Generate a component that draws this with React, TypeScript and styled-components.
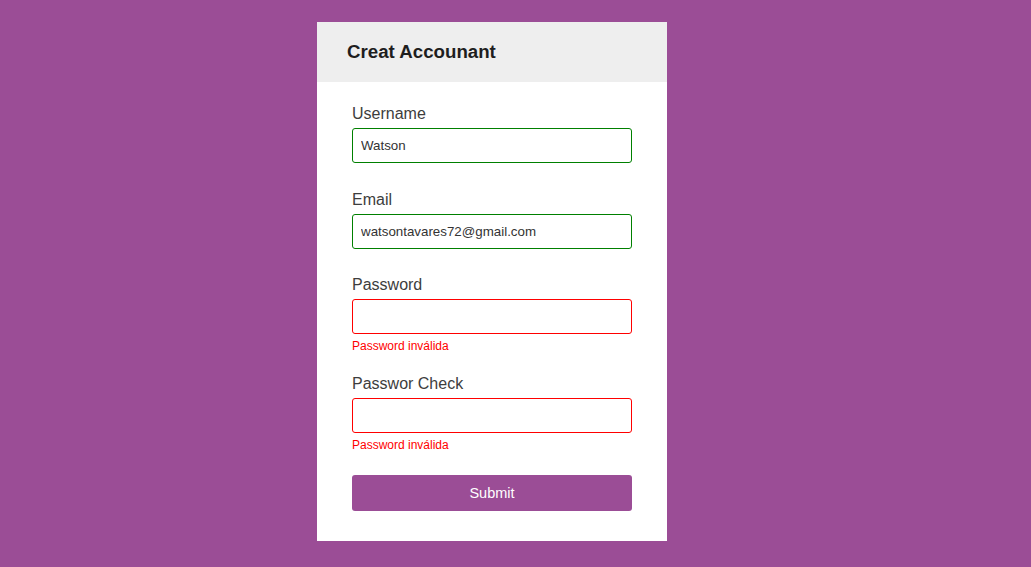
import React from 'react';
import styled, { createGlobalStyle } from 'styled-components';

const purple = '#9b4d96';

const GlobalStyle = createGlobalStyle`
    html, body {
        margin: 0;
        padding: 0;
        background-color: ${purple};
        font-family: 'Liberation Sans', Arial, sans-serif;
    }
`;

interface FieldData {
    label: string;
    value: string;
    error?: string;
}

const fields: FieldData[] = [
    { label: 'Username', value: 'Watson' },
    { label: 'Email', value: 'watsontavares72@gmail.com' },
    { label: 'Password', value: '', error: 'Password inválida' },
    { label: 'Passwor Check', value: '', error: 'Password inválida' },
];

export default function App() {
    return (
        <>
            <GlobalStyle />
            <Page>
                <Card>
                    <Header>
                        <Title>Creat Accounant</Title>
                    </Header>
                    <Form onSubmit={(e) => e.preventDefault()}>
                        {fields.map((field) => (
                            <Field key={field.label} $error={!!field.error}>
                                <Label>{field.label}</Label>
                                <Input defaultValue={field.value} $error={!!field.error} />
                                {field.error && <ErrorText>{field.error}</ErrorText>}
                            </Field>
                        ))}
                        <SubmitButton type='submit'>Submit</SubmitButton>
                    </Form>
                </Card>
            </Page>
        </>
    );
}

const Page = styled.div`
    min-height: 567px;
    display: flex;
    justify-content: center;
    align-items: flex-start;
    padding: 22px 47px 0 0;
    box-sizing: border-box;
`;

const Card = styled.div`
    width: 350px;
    background-color: #fff;
    overflow: hidden;
`;

const Header = styled.div`
    height: 60px;
    background-color: #eeeeee;
    padding: 0 30px;
    display: flex;
    align-items: center;
`;

const Title = styled.h2`
    margin: 0;
    font-size: 18.7px;
    font-weight: bold;
    color: #1e1e1e;
`;

const Form = styled.form`
    padding: 22px 35px 30px;
    display: flex;
    flex-direction: column;
`;

const Field = styled.div<{ $error: boolean }>`
    display: flex;
    flex-direction: column;
    margin-bottom: ${(p) => (p.$error ? 21 : 26.5)}px;
`;

const Label = styled.label`
    font-size: 16px;
    line-height: 20px;
    color: #3d3d3d;
    margin-bottom: 4px;
`;

const Input = styled.input<{ $error: boolean }>`
    box-sizing: border-box;
    width: 100%;
    height: 35px;
    padding: 0 8px;
    font-family: 'Liberation Sans', Arial, sans-serif;
    font-size: 13.33px;
    color: #333;
    background-color: #fff;
    border: 1px solid ${(p) => (p.$error ? '#ff0000' : '#008000')};
    border-radius: 3px;
    outline: none;
`;

const ErrorText = styled.small`
    margin-top: 5px;
    font-size: 12px;
    line-height: 14px;
    color: #ff0000;
`;

const SubmitButton = styled.button`
    margin-top: 2px;
    height: 36px;
    width: 100%;
    border: none;
    border-radius: 3px;
    background-color: ${purple};
    color: #fff;
    font-family: 'Liberation Sans', Arial, sans-serif;
    font-size: 14.5px;
    cursor: pointer;
`;
